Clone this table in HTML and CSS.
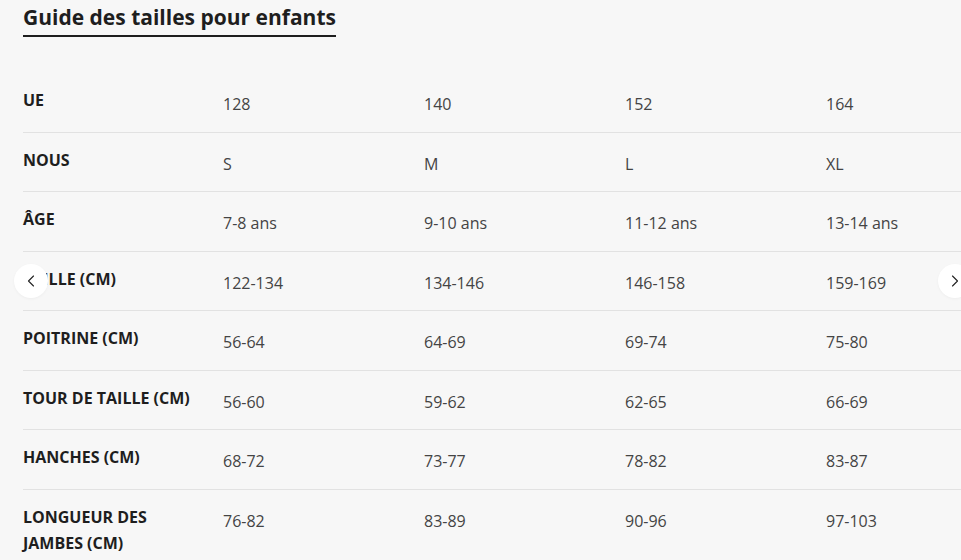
FILE: index.html
```html
<!DOCTYPE html>
<html lang="fr">
<head>
<meta charset="utf-8">
<title>Guide des tailles pour enfants</title>
<link rel="stylesheet" href="styles.css">
</head>
<body>
<div class="page">
  <h2 class="title">Guide des tailles pour enfants</h2>
  <div class="table-wrap">
    <table class="sizes">
      <tbody>
        <tr><th>UE</th><td>128</td><td>140</td><td>152</td><td>164</td></tr>
        <tr><th>NOUS</th><td>S</td><td>M</td><td>L</td><td>XL</td></tr>
        <tr><th>ÂGE</th><td>7-8 ans</td><td>9-10 ans</td><td>11-12 ans</td><td>13-14 ans</td></tr>
        <tr><th>TAILLE (CM)</th><td>122-134</td><td>134-146</td><td>146-158</td><td>159-169</td></tr>
        <tr><th>POITRINE (CM)</th><td>56-64</td><td>64-69</td><td>69-74</td><td>75-80</td></tr>
        <tr><th>TOUR DE TAILLE (CM)</th><td>56-60</td><td>59-62</td><td>62-65</td><td>66-69</td></tr>
        <tr><th>HANCHES (CM)</th><td>68-72</td><td>73-77</td><td>78-82</td><td>83-87</td></tr>
        <tr><th>LONGUEUR DES JAMBES (CM)</th><td>76-82</td><td>83-89</td><td>90-96</td><td>97-103</td></tr>
      </tbody>
    </table>
    <button class="nav nav-prev" aria-label="Précédent">
      <svg width="12" height="12" viewBox="0 0 12 12"><path d="M8.5 1 L3.5 6 L8.5 11" fill="none" stroke="#222" stroke-width="1.1" stroke-linecap="round" stroke-linejoin="round"/></svg>
    </button>
    <button class="nav nav-next" aria-label="Suivant">
      <svg width="12" height="12" viewBox="0 0 12 12"><path d="M3.5 1 L8.5 6 L3.5 11" fill="none" stroke="#222" stroke-width="1.1" stroke-linecap="round" stroke-linejoin="round"/></svg>
    </button>
  </div>
</div>
</body>
</html>
```
FILE: styles.css
```css
html, body {
  margin: 0;
  padding: 0;
  background: #f7f7f7;
  font-family: "Open Sans", "Noto Sans", sans-serif;
  color: #222;
  overflow: hidden;
}
.page {
  padding: 4px 0 0 23px;
  width: 938px;
  height: 556px;
  overflow: hidden;
}
.title {
  display: inline-block;
  margin: 0;
  font-size: 21px;
  font-weight: 700;
  line-height: 26px;
  color: #1e1e1e;
  padding-bottom: 5px;
  border-bottom: 2px solid #1e1e1e;
}
.table-wrap {
  position: relative;
  margin-top: 36px;
}
.sizes {
  border-collapse: collapse;
  table-layout: fixed;
  width: 1004px;
}
.sizes tr {
  border-bottom: 1px solid #e2e2e2;
}
.sizes tr:last-child {
  border-bottom: none;
}
.sizes th {
  width: 200px;
  text-align: left;
  vertical-align: top;
  font-size: 16px;
  font-weight: 700;
  line-height: 26px;
  padding: 14px 30px 18.5px 0;
  color: #1e1e1e;
  box-sizing: border-box;
}
.sizes td {
  width: 201px;
  vertical-align: top;
  font-size: 16px;
  font-weight: 400;
  line-height: 26px;
  padding: 18px 0 14.5px 0;
  color: #444;
}
.nav {
  position: absolute;
  top: 191px;
  width: 34px;
  height: 34px;
  border-radius: 50%;
  border: none;
  background: #fff;
  box-shadow: 0 1px 3px rgba(0,0,0,0.04);
  display: flex;
  align-items: center;
  justify-content: center;
  padding: 0;
}
.nav-prev {
  left: -9px;
}
.nav-next {
  left: 915px;
}
```
